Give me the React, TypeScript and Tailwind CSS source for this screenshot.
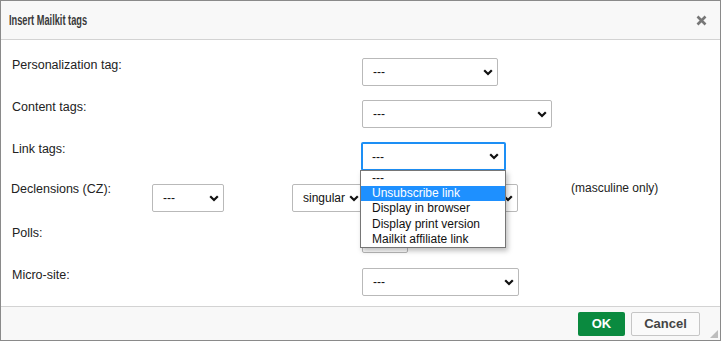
import React from "react";

const font = { fontFamily: '"Liberation Sans", Arial, sans-serif' };

function Chevron() {
  return (
    <svg width="10" height="7" viewBox="0 0 10 7" className="shrink-0">
      <path d="M1.2 1.2 L5 5 L8.8 1.2" fill="none" stroke="#111" strokeWidth="2.2" />
    </svg>
  );
}

function Select({ w, value = "---", focused = false, h = "h-[28px]" }: { w: string; value?: string; focused?: boolean; h?: string }) {
  return (
    <div
      className={`${w} ${h} shrink-0 flex items-center justify-between rounded-[2px] bg-white text-[12px] text-[#111] ${
        focused ? "border-2 border-[#1d8ff5] pl-[9px] pr-[5px]" : "border border-[#b9b9b9] pl-[10px] pr-[4px]"
      }`}
    >
      <span>{value}</span>
      <Chevron />
    </div>
  );
}

const options = ["---", "Unsubscribe link", "Display in browser", "Display print version", "Mailkit affiliate link"];

export default function App() {
  return (
    <div style={font} className="w-[721px] h-[341px] border border-[#8a8a8a] flex flex-col bg-white text-[#222]">
      <div className="h-[39px] shrink-0 border-b border-[#d3d3d3] bg-[#f8f8f8] flex items-center justify-between pl-[8px] pr-[13px]">
        <span className="inline-block origin-left scale-x-[0.66] text-[14px] font-bold text-[#3a3a3a] whitespace-nowrap">
          Insert Mailkit tags
        </span>
        <svg width="11" height="11" viewBox="0 0 11 11">
          <path d="M1.5 1.5 L9.5 9.5 M9.5 1.5 L1.5 9.5" stroke="#777" strokeWidth="2.6" />
        </svg>
      </div>

      <div className="h-[266px] shrink-0 pt-[18px] pl-[11px] flex flex-col gap-[14px] text-[12.5px]">
        <div className="flex items-start h-[28px]">
          <div className="w-[350px] leading-[14px]">Personalization tag:</div>
          <Select w="w-[136px]" />
        </div>
        <div className="flex items-start h-[28px]">
          <div className="w-[350px] leading-[14px]">Content tags:</div>
          <Select w="w-[190px]" />
        </div>
        <div className="flex items-start h-[28px]">
          <div className="w-[349px] leading-[14px]">Link tags:</div>
          <div className="relative">
            <Select w="w-[145px]" h="h-[29px]" focused />
            <div className="absolute left-[-1px] top-[28px] z-10 w-[146px] border border-[#767676] bg-white shadow-[2px_3px_5px_rgba(0,0,0,0.25)]">
              {options.map((o, i) => (
                <div
                  key={o}
                  className={`h-[15.2px] leading-[15.2px] pl-[11px] text-[12px] ${
                    i === 1 ? "bg-[#1e90ff] text-white" : "text-[#111]"
                  }`}
                >
                  {o}
                </div>
              ))}
            </div>
          </div>
        </div>
        <div className="flex items-start h-[28px] -ml-[1px]">
          <div className="w-[141px] leading-[14px] -mt-[2px]">Declensions (CZ):</div>
          <Select w="w-[72px]" />
          <div className="w-[68px] shrink-0" />
          <Select w="w-[72px]" value="singular" />
          <div className="w-[8px] shrink-0" />
          <Select w="w-[146px]" value="" />
          <div className="w-[53px] shrink-0" />
          <div className="leading-[14px] -mt-[3px] text-[12px]">(masculine only)</div>
        </div>
        <div className="flex items-start h-[28px]">
          <div className="w-[350px] leading-[14px]">Polls:</div>
          <Select w="w-[46px]" h="h-[27px]" value="" />
        </div>
        <div className="flex items-start h-[28px]">
          <div className="w-[350px] leading-[14px]">Micro-site:</div>
          <Select w="w-[157px]" />
        </div>
      </div>

      <div className="relative flex-1 border-t border-[#d3d3d3] bg-[#f8f8f8] flex items-start justify-end pt-[5px] pr-[20px] gap-[6px]">
        <button className="w-[47px] h-[24px] rounded-[2px] bg-[#0a8a3f] text-white text-[13px] font-bold">OK</button>
        <button className="w-[69px] h-[24px] rounded-[2px] border border-[#c6c6c6] bg-[#fafafa] text-[#444] text-[13px] font-bold">
          Cancel
        </button>
        <svg width="8" height="8" viewBox="0 0 8 8" className="absolute right-[2px] bottom-[2px]">
          <path d="M8 0 L8 8 L0 8 Z" fill="#bdbdbd" />
        </svg>
      </div>
    </div>
  );
}
